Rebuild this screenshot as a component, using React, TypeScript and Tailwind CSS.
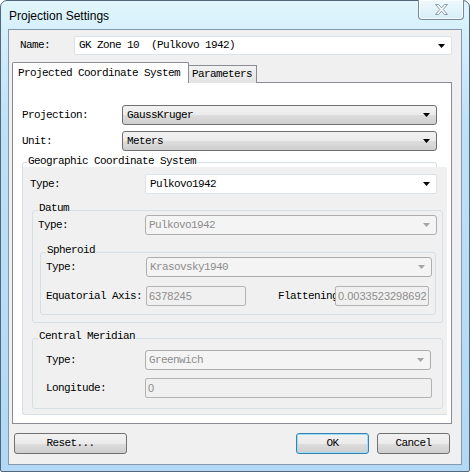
import React from "react";

const mono = "font-[family-name:'Liberation_Mono','DejaVu_Sans_Mono',monospace] text-[11px] tracking-[-0.6px] leading-none text-black";
const sans = "font-[family-name:'Liberation_Sans',Arial,sans-serif] text-[11px] leading-none";

function Arrow({ disabled }: { disabled?: boolean }) {
  return (
    <svg width="7" height="4" viewBox="0 0 7 4" className="shrink-0">
      <polygon points="0,0 7,0 3.5,4" fill={disabled ? "#a5a5a5" : "#000"} />
    </svg>
  );
}

// readonly dropdown (Win7 button-look combo)
function DropList({ value, w }: { value: string; w: string }) {
  return (
    <div className={`${w} h-[20px] flex items-center justify-between pl-[4px] pr-[6px] rounded-[3px] border border-[#707070] bg-[linear-gradient(to_bottom,#f2f2f2_0%,#ebebeb_50%,#dddddd_50%,#cfcfcf_100%)]`}>
      <span className={mono}>{value}</span>
      <Arrow />
    </div>
  );
}

// editable combo, white
function EditCombo({ value, w }: { value: string; w: string }) {
  return (
    <div className={`${w} h-[20px] flex items-center justify-between pl-[4px] pr-[6px] rounded-[2px] border border-[#dbe2e8] bg-white`}>
      <span className={`${mono} whitespace-pre`}>{value}</span>
      <Arrow />
    </div>
  );
}

function DisabledCombo({ value, w }: { value: string; w: string }) {
  return (
    <div className={`${w} h-[20px] flex items-center justify-between pl-[3px] pr-[6px] rounded-[3px] border border-[#adadad] bg-[#f4f4f4]`}>
      <span className={`${mono} !text-[#8d8d8d]`}>{value}</span>
      <Arrow disabled />
    </div>
  );
}

function DisabledInput({ value, w }: { value: string; w: string }) {
  return (
    <div className={`${w} h-[20px] flex items-center pl-[2px] overflow-hidden whitespace-nowrap rounded-[2px] border border-[#b3b3b3] bg-[#f0f0f0]`}>
      <span className={`${sans} text-[#8d8d8d]`}>{value}</span>
    </div>
  );
}

function Row({ label, labelW, children, className }: { label: string; labelW: string; children: React.ReactNode; className?: string }) {
  return (
    <div className={`flex items-center ${className ?? ""}`}>
      <div className={`${labelW} shrink-0 ${mono}`}>{label}</div>
      {children}
    </div>
  );
}

function Group({ title, className, children }: { title: string; className: string; children: React.ReactNode }) {
  return (
    <div className={`relative border border-[#d5dfe5] rounded-[3px] ${className}`}>
      <span className={`absolute left-[5px] top-[-8px] px-[1px] bg-[#f0f0f0] ${mono}`}>{title}</span>
      {children}
    </div>
  );
}

function Button({ label, w, focused }: { label: string; w: string; focused?: boolean }) {
  return (
    <div className={`${w} h-[21px] flex items-center justify-center rounded-[3px] border ${focused ? "border-[#3c7fb1] shadow-[inset_0_0_0_1px_#9be0fb]" : "border-[#707070]"} bg-[linear-gradient(to_bottom,#f2f2f2_0%,#ebebeb_50%,#dddddd_50%,#cfcfcf_100%)]`}>
      <span className={mono}>{label}</span>
    </div>
  );
}

export default function App() {
  return (
    <div className="w-[470px] h-[472px] bg-white">
      <div className="w-full h-full flex flex-col rounded-t-[7px] rounded-b-[2px] border border-[#52677b] bg-[linear-gradient(to_bottom,#e1f6fc_0px,#d6f0fb_28px,#bfe1f7_120px,#b2d8f5_100%)] px-[7px] pb-[6px]">
        {/* title bar */}
        <div className="relative h-[28px] shrink-0 flex items-center pl-[1px]">
          <span className="font-[family-name:'Liberation_Sans',Arial,sans-serif] text-[12px] text-black leading-none mt-[1px]">Projection Settings</span>
          <div className="absolute right-[-2px] top-[-1px] w-[46px] h-[20px] flex items-center justify-center rounded-b-[4px] border border-t-0 border-[#7b8a99] bg-[linear-gradient(to_bottom,#eef9fd,#d7eef9)] shadow-[inset_0_0_0_1px_rgba(255,255,255,0.7)]">
            <svg width="13" height="11" viewBox="0 0 13 11">
              <polygon points="0.5,0.5 3.5,0.5 6.5,3.8 9.5,0.5 12.5,0.5 8.2,5.5 12.5,10.5 9.5,10.5 6.5,7.2 3.5,10.5 0.5,10.5 4.8,5.5" fill="#f7f9fb" stroke="#8c99a6" strokeWidth="1" />
            </svg>
          </div>
        </div>

        {/* client */}
        <div className="flex-1 flex flex-col border border-[#8398ab] bg-[#f0f0f0] pl-[3px] pr-[9px] pt-[6px]">
          {/* name */}
          <div className="flex items-center h-[19px]">
            <div className={`w-[62px] pl-[8px] shrink-0 ${mono}`}>Name:</div>
            <EditCombo value="GK Zone 10  (Pulkovo 1942)" w="flex-1 !h-[19px]" />
          </div>

          {/* tabs */}
          <div className="flex items-end h-[21px] mt-[7px] relative z-10 -mb-px">
            <div className="w-[177px] h-[21px] flex items-center pl-[5px] bg-white border border-b-0 border-[#898c95] rounded-t-[2px]">
              <span className={mono}>Projected Coordinate System</span>
            </div>
            <div className="w-[69px] h-[18px] -ml-px flex items-center pl-[3px] border border-[#898c95] border-b-0 bg-[linear-gradient(to_bottom,#f2f2f2,#e3e3e3)]">
              <span className={mono}>Parameters</span>
            </div>
          </div>

          {/* panel */}
          <div className="h-[342px] shrink-0 border border-[#898c95] bg-white pt-[22px] flex flex-col">
            <Row label="Projection:" labelW="w-[109px] pl-[9px]">
              <DropList value="GaussKruger" w="w-[315px]" />
            </Row>
            <Row label="Unit:" labelW="w-[109px] pl-[9px]" className="mt-[6px]">
              <DropList value="Meters" w="w-[315px]" />
            </Row>

            {/* geographic coordinate system */}
            <div className="relative ml-[9px] w-[425px] mt-[11px] h-[253px] flex flex-col">
              <div className="h-[5px] w-[415px] shrink-0 border border-b-0 border-[#d5dfe5] rounded-t-[3px] bg-white" />
              <span className={`absolute left-[5px] top-[-6px] px-[1px] bg-white ${mono}`}>Geographic Coordinate System</span>
              <div className="flex-1 border-l border-b border-[#d5dfe5] rounded-bl-[3px] bg-[#f0f0f0] flex flex-col pt-[7px]">
                <Row label="Type:" labelW="w-[122px] pl-[7px]">
                  <EditCombo value="Pulkovo1942" w="w-[292px]" />
                </Row>

                {/* datum */}
                <Group title="Datum" className="ml-[9px] w-[411px] h-[113px] mt-[16px] flex flex-col pt-[4px]">
                  <Row label="Type:" labelW="w-[112px] pl-[5px]">
                    <DisabledCombo value="Pulkovo1942" w="w-[292px]" />
                  </Row>
                  <Group title="Spheroid" className="ml-[7px] w-[396px] h-[63px] mt-[17px] flex flex-col pt-[4px]">
                    <Row label="Type:" labelW="w-[105px] pl-[5px]">
                      <DisabledCombo value="Krasovsky1940" w="w-[286px]" />
                    </Row>
                    <Row label="Equatorial Axis:" labelW="w-[105px] pl-[5px] whitespace-nowrap" className="mt-[9px]">
                      <DisabledInput value="6378245" w="w-[100px]" />
                      <div className={`ml-[32px] w-[57px] overflow-hidden whitespace-nowrap ${mono}`}>Flattening:</div>
                      <DisabledInput value="0.0033523298692" w="w-[94px]" />
                    </Row>
                  </Group>
                </Group>

                {/* central meridian */}
                <Group title="Central Meridian" className="ml-[9px] w-[411px] h-[71px] mt-[15px] flex flex-col pt-[11px]">
                  <Row label="Type:" labelW="w-[112px] pl-[13px]">
                    <DisabledCombo value="Greenwich" w="w-[286px]" />
                  </Row>
                  <Row label="Longitude:" labelW="w-[112px] pl-[13px]" className="mt-[8px]">
                    <DisabledInput value="0" w="w-[287px]" />
                  </Row>
                </Group>
              </div>
            </div>
          </div>

          {/* buttons */}
          <div className="flex items-center mt-[9px] pl-[2px]">
            <Button label="Reset..." w="w-[113px]" />
            <div className="flex-1" />
            <Button label="OK" w="w-[73px]" focused />
            <div className="w-[8px]" />
            <Button label="Cancel" w="w-[73px]" />
            <div className="w-[2px]" />
          </div>
        </div>
      </div>
    </div>
  );
}
